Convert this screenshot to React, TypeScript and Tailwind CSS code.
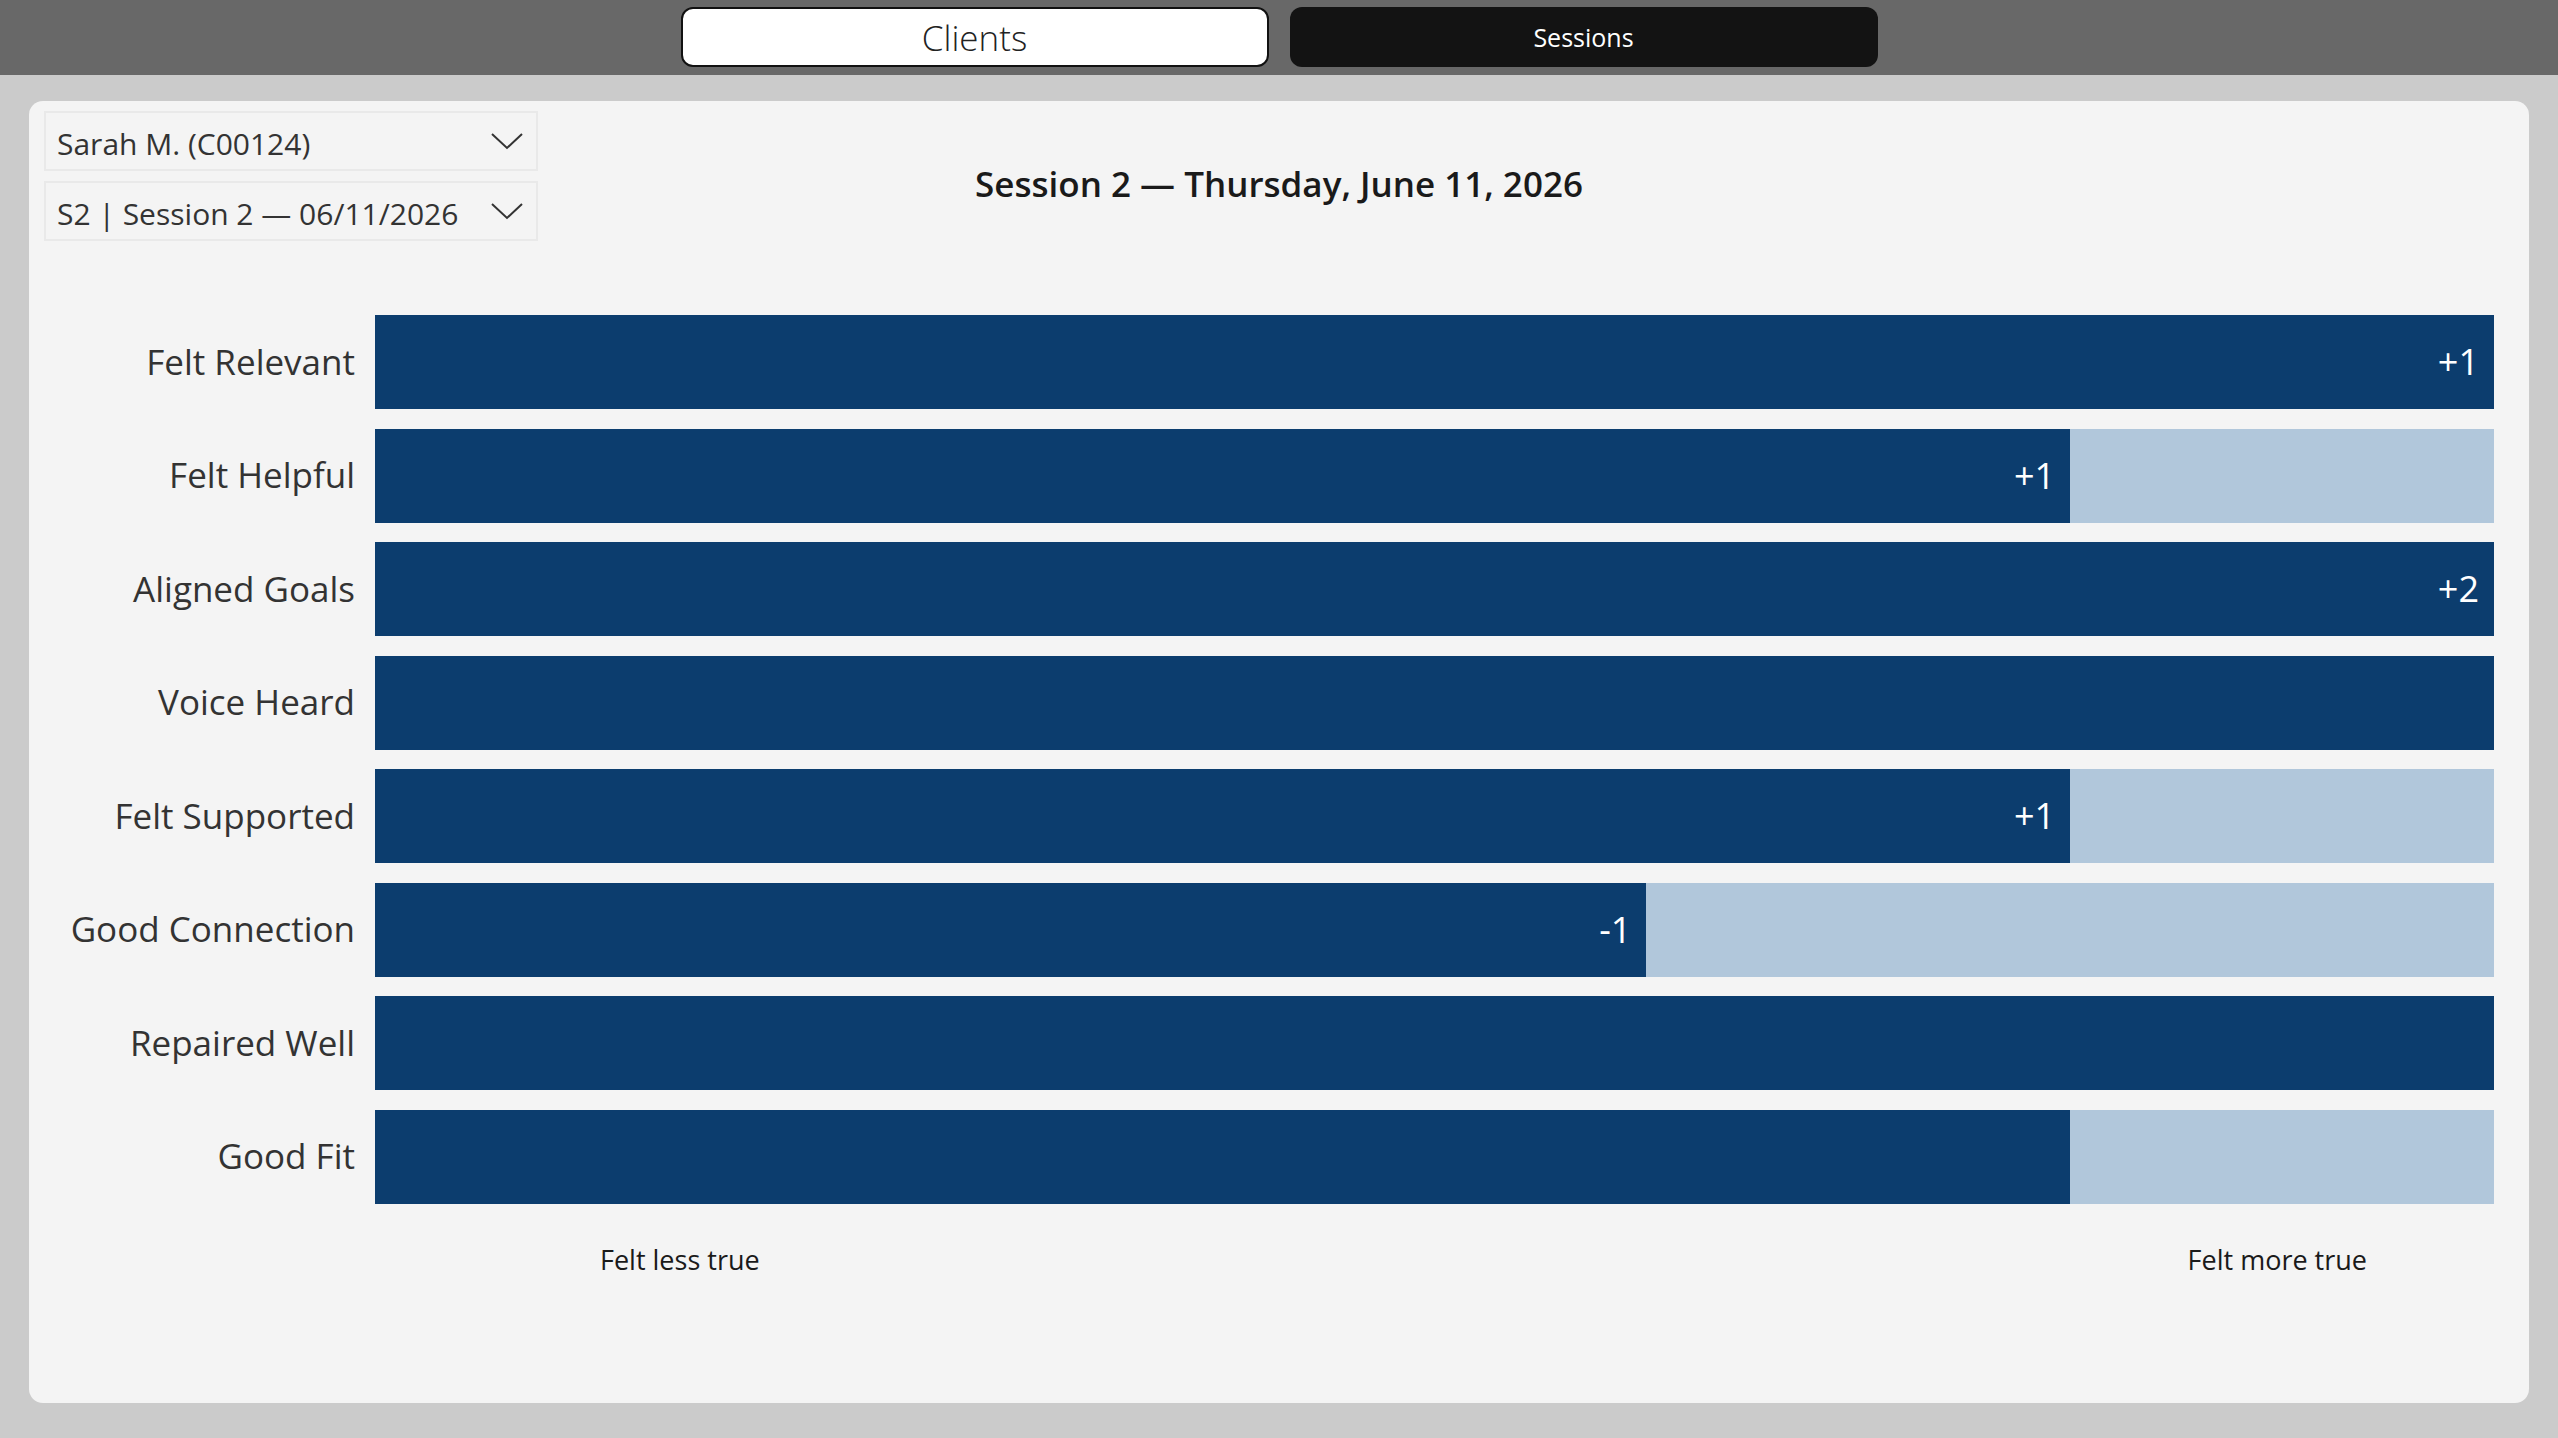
import React from 'react';

type Row = { label: string; fill: number; value?: string };

const rows: Row[] = [
  { label: 'Felt Relevant', fill: 1, value: '+1' },
  { label: 'Felt Helpful', fill: 0.8, value: '+1' },
  { label: 'Aligned Goals', fill: 1, value: '+2' },
  { label: 'Voice Heard', fill: 1 },
  { label: 'Felt Supported', fill: 0.8, value: '+1' },
  { label: 'Good Connection', fill: 0.6, value: '-1' },
  { label: 'Repaired Well', fill: 1 },
  { label: 'Good Fit', fill: 0.8 },
];

function Chevron() {
  return (
    <svg width="34" height="20" viewBox="0 0 34 20" fill="none">
      <polyline points="2,3 17,17 32,3" stroke="#333" strokeWidth="2" />
    </svg>
  );
}

function Dropdown({ text }: { text: string }) {
  return (
    <div className="h-[60px] w-[494px] border-2 border-[#e9e9e9] flex items-center justify-between pl-[11px] pr-[12px]">
      <span className="text-[30px] text-[#333] pt-[4px]">{text}</span>
      <Chevron />
    </div>
  );
}

export default function App() {
  return (
    <div className="w-full h-[1438px] bg-[#cbcbcb] flex flex-col font-['Open_Sans',sans-serif]">
      <div className="h-[75px] bg-[#686868] flex justify-center gap-[21px] pt-[7px] shrink-0">
        <button className="w-[588px] h-[60px] bg-white border-2 border-[#111] rounded-[12px] text-[35px] font-light text-[#222] leading-none">
          Clients
        </button>
        <button className="w-[588px] h-[60px] bg-[#131313] rounded-[12px] text-[25px] text-white leading-none">
          Sessions
        </button>
      </div>

      <div className="flex-1 px-[29px] pt-[26px] pb-[35px]">
        <div className="h-full bg-[#f4f4f4] rounded-[14px] px-[15px] pt-[10px] flex flex-col">
          <div className="grid grid-cols-[1fr_auto_1fr] items-start">
            <div className="flex flex-col gap-[10px]">
              <Dropdown text="Sarah M. (C00124)" />
              <Dropdown text="S2 | Session 2 — 06/11/2026" />
            </div>
            <div className="mt-[49px] text-[35px] leading-[48px] font-semibold text-[#1a1a1a] text-center">
              Session 2 — Thursday, June 11, 2026
            </div>
            <div />
          </div>

          <div className="mt-[74px] pr-[20px] flex flex-col gap-[19.5px]">
            {rows.map((r) => (
              <div key={r.label} className="flex items-center">
                <div className="w-[311px] text-right text-[35px] text-[#333]">{r.label}</div>
                <div className="ml-[20px] flex-1 h-[94px] bg-[#b1c7db] flex">
                  <div
                    className="h-full bg-[#0c3d6e] flex items-center justify-end pr-[15px]"
                    style={{ width: `${r.fill * 100}%` }}
                  >
                    {r.value && <span className="text-[36px] text-white">{r.value}</span>}
                  </div>
                </div>
              </div>
            ))}
          </div>

          <div className="flex pr-[20px]">
            <div className="w-[331px]" />
            <div className="flex-1 flex justify-between pl-[225px] pr-[127px] mt-[38px] text-[27px] leading-[36px] text-[#1a1a1a]">
              <span>Felt less true</span>
              <span>Felt more true</span>
            </div>
          </div>
        </div>
      </div>
    </div>
  );
}
